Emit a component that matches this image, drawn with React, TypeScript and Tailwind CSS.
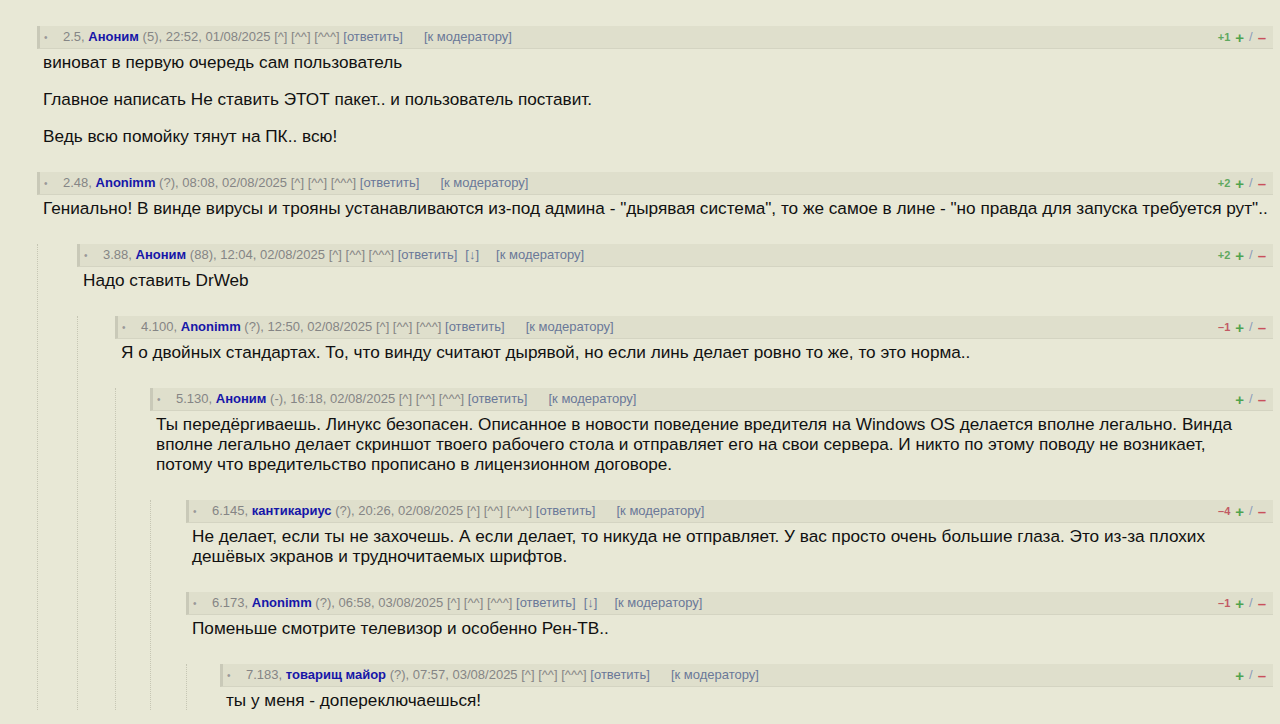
import React from 'react'

type Comment = {
  num: string
  name: string
  karma: string
  time: string
  down?: boolean
  score?: string
  body: string[]
  children?: Comment[]
}

const thread: Comment[] = [
  {
    num: '2.5',
    name: 'Аноним',
    karma: '5',
    time: '22:52, 01/08/2025',
    score: '+1',
    body: [
      'виноват в первую очередь сам пользователь',
      'Главное написать Не ставить ЭТОТ пакет.. и пользователь поставит.',
      'Ведь всю помойку тянут на ПК.. всю!',
    ],
  },
  {
    num: '2.48',
    name: 'Anonimm',
    karma: '?',
    time: '08:08, 02/08/2025',
    score: '+2',
    body: [
      'Гениально! В винде вирусы и трояны устанавливаются из-под админа - "дырявая система", то же самое в лине - "но правда для запуска требуется рут"..',
    ],
    children: [
      {
        num: '3.88',
        name: 'Аноним',
        karma: '88',
        time: '12:04, 02/08/2025',
        down: true,
        score: '+2',
        body: ['Надо ставить DrWeb'],
        children: [
          {
            num: '4.100',
            name: 'Anonimm',
            karma: '?',
            time: '12:50, 02/08/2025',
            score: '–1',
            body: [
              'Я о двойных стандартах. То, что винду считают дырявой, но если линь делает ровно то же, то это норма..',
            ],
            children: [
              {
                num: '5.130',
                name: 'Аноним',
                karma: '-',
                time: '16:18, 02/08/2025',
                body: [
                  'Ты передёргиваешь. Линукс безопасен. Описанное в новости поведение вредителя на Windows OS делается вполне легально. Винда\nвполне легально делает скриншот твоего рабочего стола и отправляет его на свои сервера. И никто по этому поводу не возникает,\nпотому что вредительство прописано в лицензионном договоре.',
                ],
                children: [
                  {
                    num: '6.145',
                    name: 'кантикариус',
                    karma: '?',
                    time: '20:26, 02/08/2025',
                    score: '–4',
                    body: [
                      'Не делает, если ты не захочешь. А если делает, то никуда не отправляет. У вас просто очень большие глаза. Это из-за плохих дешёвых экранов и трудночитаемых шрифтов.',
                    ],
                  },
                  {
                    num: '6.173',
                    name: 'Anonimm',
                    karma: '?',
                    time: '06:58, 03/08/2025',
                    down: true,
                    score: '–1',
                    body: ['Поменьше смотрите телевизор и особенно Рен-ТВ..'],
                    children: [
                      {
                        num: '7.183',
                        name: 'товарищ майор',
                        karma: '?',
                        time: '07:57, 03/08/2025',
                        body: ['ты у меня - допереключаешься!'],
                      },
                    ],
                  },
                ],
              },
            ],
          },
        ],
      },
    ],
  },
]

// indent of the children block, per nesting depth (1px goes to the dotted border)
const indents = ['pl-[39px]', 'pl-[37px]', 'pl-[34px]', 'pl-[35px]', 'pl-[33px]', 'pl-[33px]']

function Votes({ score }: { score?: string }) {
  const positive = score?.startsWith('+')
  return (
    <div className="flex items-center gap-[5px] pr-[7px] font-bold">
      {score && (
        <span className={`text-[11px] ${positive ? 'text-[#5fa85f]' : 'text-[#c25a64]'}`}>{score}</span>
      )}
      <span className="text-[15px] leading-none text-[#4fa34f]">+</span>
      <span className="text-[13px] font-normal text-[#8d9cbb]">/</span>
      <span className="text-[15px] leading-none text-[#c9505c]">–</span>
    </div>
  )
}

function CommentItem({ c, depth }: { c: Comment; depth: number }) {
  return (
    <div>
      <div className="flex h-[23px] items-center justify-between border-b border-l-[3px] border-b-[#d4d4c2] border-l-[#c9c9b8] bg-[#dfdfcc] text-[13px] text-[#858585]">
        <div className="flex items-center whitespace-pre">
          <span className="w-[23px] pl-[4px] text-[10px] text-[#999999]">•</span>
          <span>{c.num}, </span>
          <span className="font-bold text-[#1616a8]">{c.name}</span>
          <span> ({c.karma}), {c.time} [^] [^^] [^^^] </span>
          <span className="text-[#6a7898]">[ответить]</span>
          {c.down && <span className="ml-[8px] text-[#6a7898]">[↓]</span>}
          <span className={`${c.down ? 'ml-[17px]' : 'ml-[21px]'} text-[#6a7898]`}>[к модератору]</span>
        </div>
        <Votes score={c.score} />
      </div>
      <div className="mb-[26px] pl-[6px] pt-[3px] text-[17.2px] leading-[20px] text-[#111111]">
        {c.body.map((p, i) => (
          <p key={i} className={`whitespace-pre-line ${i < c.body.length - 1 ? 'mb-[17px]' : ''}`}>
            {p}
          </p>
        ))}
      </div>
      {c.children && (
        <div className={`border-l border-dotted border-[#c6c6b4] ${indents[depth]}`}>
          {c.children.map((ch, i) => (
            <CommentItem key={i} c={ch} depth={depth + 1} />
          ))}
        </div>
      )}
    </div>
  )
}

export default function App() {
  return (
    <div className="min-h-screen overflow-hidden bg-[#e8e8d6] pl-[37px] pr-[7px] pt-[26px] font-['Liberation_Sans',Arial,sans-serif]">
      {thread.map((c, i) => (
        <CommentItem key={i} c={c} depth={0} />
      ))}
    </div>
  )
}
